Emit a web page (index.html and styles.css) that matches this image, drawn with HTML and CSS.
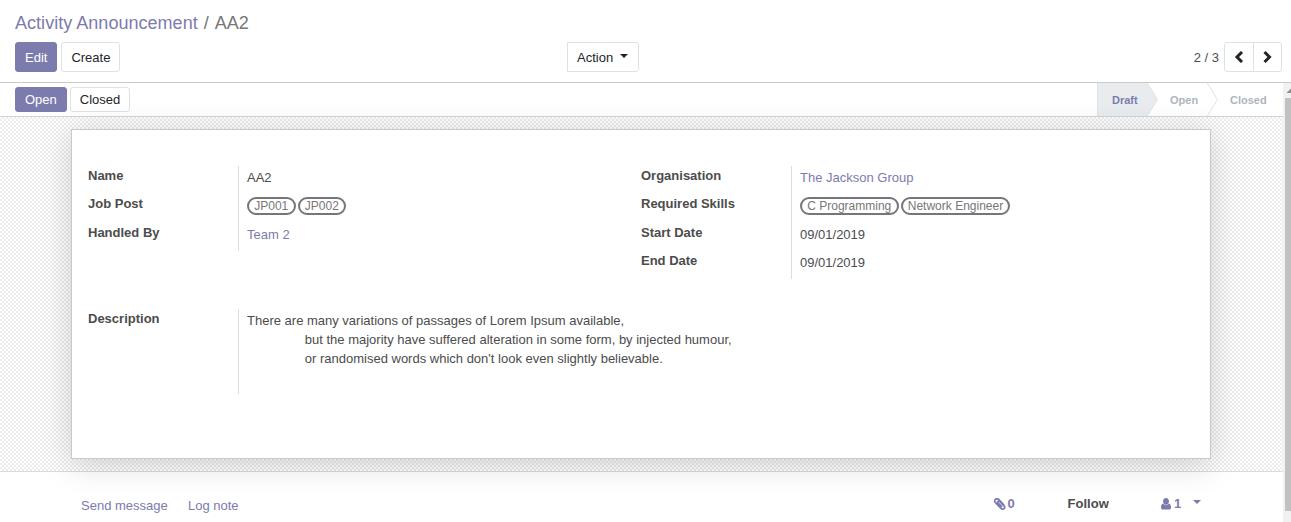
FILE: index.html
```html
<!DOCTYPE html>
<html lang="en">
<head>
<meta charset="utf-8">
<title>Activity Announcement / AA2</title>
<link rel="stylesheet" href="styles.css">
</head>
<body>
<header class="control-panel">
  <nav class="breadcrumb"><a class="link">Activity Announcement</a><span class="sep">/</span><span>AA2</span></nav>
  <div class="toolbar">
    <div class="buttons"><button class="btn primary">Edit</button><button class="btn">Create</button></div>
    <button class="btn action">Action <i class="caret"></i></button>
    <div class="pager"><span class="count">2 / 3</span>
      <button class="btn prev"><svg width="10" height="12" viewBox="0 0 10 12"><path d="M8 1 L3 6 L8 11"/></svg></button><button class="btn next"><svg width="10" height="12" viewBox="0 0 10 12"><path d="M1.5 1 L6.5 6 L1.5 11"/></svg></button>
    </div>
  </div>
</header>
<main class="content">
  <section class="form">
    <div class="statusbar">
      <div class="status-buttons"><button class="btn small primary">Open</button><button class="btn small">Closed</button></div>
      <div class="stages">
        <span class="stage draft">Draft</span>
        <svg class="chevron" width="12" height="33" viewBox="0 0 12 33"><path d="M0 0 L10.4 16.5 L0 33Z" fill="#e9ecef"/><path d="M.3 0 L10.4 16.5 L.3 33" fill="none" stroke="#dee2e6"/></svg>
        <span class="stage open">Open</span>
        <svg class="chevron" width="12" height="33" viewBox="0 0 12 33"><path d="M.3 0 L10.4 16.5 L.3 33" fill="none" stroke="#dee2e6"/></svg>
        <span class="stage closed">Closed</span>
      </div>
    </div>
    <div class="sheet-bg">
      <article class="sheet">
        <div class="columns">
          <dl class="group">
            <dt>Name</dt><dd>AA2</dd>
            <dt>Job Post</dt><dd class="tags"><span class="tag">JP001</span><span class="tag">JP002</span></dd>
            <dt>Handled By</dt><dd class="link">Team 2</dd>
          </dl>
          <dl class="group">
            <dt>Organisation</dt><dd class="link">The Jackson Group</dd>
            <dt>Required Skills</dt><dd class="tags"><span class="tag">C Programming</span><span class="tag">Network Engineer</span></dd>
            <dt>Start Date</dt><dd>09/01/2019</dd>
            <dt>End Date</dt><dd>09/01/2019</dd>
          </dl>
        </div>
        <dl class="group description">
          <dt>Description</dt>
          <dd class="text">There are many variations of passages of Lorem Ipsum available,
                but the majority have suffered alteration in some form, by injected humour,
                or randomised words which don't look even slightly believable.</dd>
        </dl>
      </article>
    </div>
    <footer class="chatter">
      <a class="link send">Send message</a><a class="link">Log note</a>
      <a class="link attach"><svg width="12" height="12" viewBox="0 0 12 12"><path d="M10.4 7.6 L5 1.7 C3.8.5 2 .6 1.2 1.5 C.4 2.4.6 3.7 1.5 4.7 L7 10.4 C9 12.2 11.6 10.3 10.3 8.2 L5.6 3.5 C4.4 2.6 3.1 3.6 3.9 4.8 L8 8.9" fill="none" stroke="#7c7bad" stroke-width="1.7"/></svg>0</a>
      <span class="follow">Follow</span>
      <a class="link followers"><svg width="10" height="12" viewBox="0 0 10 12"><path d="M5 0 C6.7 0 8 1.4 8 3.3 C8 5.2 6.7 6.7 5 6.7 C3.3 6.7 2 5.2 2 3.3 C2 1.4 3.3 0 5 0Z M2.2 5.5 C3.7 7.7 6.3 7.7 7.8 5.5 C9.3 5.8 10 7.2 10 9.5 C10 11 9.2 11.6 8 11.6 H2 C.8 11.6 0 11 0 9.5 C0 7.2.7 5.8 2.2 5.5Z" fill="#7c7bad"/></svg>1<i class="caret"></i></a>
    </footer>
  </section>
  <aside class="scrollbar"><svg width="8" height="15" viewBox="0 0 8 15"><path d="M3.5 10 H8 V5.5Z" fill="#8b8b8b"/></svg><div class="thumb"></div></aside>
</main>
</body>
</html>
```
FILE: styles.css
```css
* { box-sizing: border-box; }
body { margin: 0; height: 522px; overflow: hidden; background: #fff; color: #4c4c4c; font: 13px/19.5px "Liberation Sans", Arial, sans-serif; }
.link { color: #7c7bad; }
.control-panel { height: 83px; border-bottom: 1px solid #cacaca; padding: 10px 9px 0 15px; }
.breadcrumb { height: 27px; line-height: 27px; font-size: 18px; letter-spacing: .03px; color: #777; }
.sep { padding: 0 6px; color: #6c757d; }
.toolbar { display: flex; justify-content: space-between; margin-top: 5px; }
.buttons { display: flex; gap: 4px; width: 552px; }
.btn { height: 30px; padding: 0 9px; border: 1px solid #dee2e6; border-radius: 3px; background: #fff; color: #212529; font: 13px/19px "Liberation Sans", Arial, sans-serif; white-space: nowrap; }
.btn.primary { background: #7c7bad; border-color: #7c7bad; color: #fff; }
.action { width: 72px; border-radius: 0 3px 3px 0; margin-right: auto; text-align: left; }
.caret { display: inline-block; border: 4px solid transparent; border-top-color: currentColor; border-bottom: 0; vertical-align: 4px; margin-left: 3px; }
.pager { display: flex; align-items: center; }
.count { margin-right: 5px; padding-top: 1px; }
.pager .btn { width: 30px; padding: 0; display: flex; align-items: center; justify-content: center; }
.pager svg { fill: none; stroke: #212529; stroke-width: 3; }
.pager .prev { border-radius: 3px 0 0 3px; }
.pager .next { border-radius: 0 3px 3px 0; margin-left: -1px; width: 29px; }
.content { display: flex; height: 439px; }
.form { width: 1283px; display: flex; flex-direction: column; }
.statusbar { height: 34px; border-bottom: 1px solid #ced4da; display: flex; justify-content: space-between; padding-left: 15px; }
.status-buttons { display: flex; gap: 3px; padding-top: 4px; }
.small { height: 25px; }
.stages { display: flex; height: 33px; font-size: 11px; font-weight: bold; line-height: 34px; color: #adb5bd; }
.stage.draft { width: 50px; padding-left: 14px; background: #e9ecef; color: #7c7bad; border-left: 1px solid #dee2e6; }
.stage.open { width: 48px; padding-left: 11px; }
.stage.closed { width: 64px; padding-left: 11px; }
.sheet-bg { position: relative; z-index: 1; height: 355px; border-bottom: 1px solid #dcdcdc; padding: 12px 72px 0 71px; background: repeating-conic-gradient(#ececec 0 25%, #fff 0 50%) 0 0 / 4px 4px; }
.sheet { height: 330px; background: #fff; border: 1px solid #c8c8d3; box-shadow: 0 5px 30px rgba(0, 0, 0, .17); padding: 36px 16px 0; }
.columns { display: grid; grid-template-columns: 553px 1fr; align-items: start; height: 143px; }
.group { display: grid; grid-template-columns: 150px 1fr; margin: 0; grid-auto-rows: 28.3px; }
dt { font-weight: bold; }
dd { margin: 0; border-left: 1px solid #ddd; padding: 2px 0 0 8px; }
.tags { display: flex; gap: 2px; align-items: flex-start; }
.tag { height: 18px; border: 2px solid #75757b; border-radius: 9px; padding: 0 5.25px; line-height: 14px; font-size: 12px; color: #777; margin-top: 1px; }
.description { grid-auto-rows: 85px; }
.text { white-space: pre-wrap; line-height: 19px; }
.chatter { display: flex; align-items: center; height: 50px; padding: 17px 0 0 81px; }
.send { width: 107px; }
.attach { margin-left: auto; width: 74px; display: flex; align-items: center; gap: 2px; font-weight: bold; }
.follow { width: 93.4px; font-weight: bold; }
.followers { width: 122px; display: flex; align-items: center; gap: 3px; font-weight: bold; }
.followers .caret { margin: -4px 0 0 9px; }
.attach, .follow, .followers { margin-top: -4px; }
.scrollbar { width: 8px; background: #f1f1f1; }
.scrollbar svg { display: block; }
.thumb { height: 413px; margin-left: 2px; background: #c1c1c1; }
```
